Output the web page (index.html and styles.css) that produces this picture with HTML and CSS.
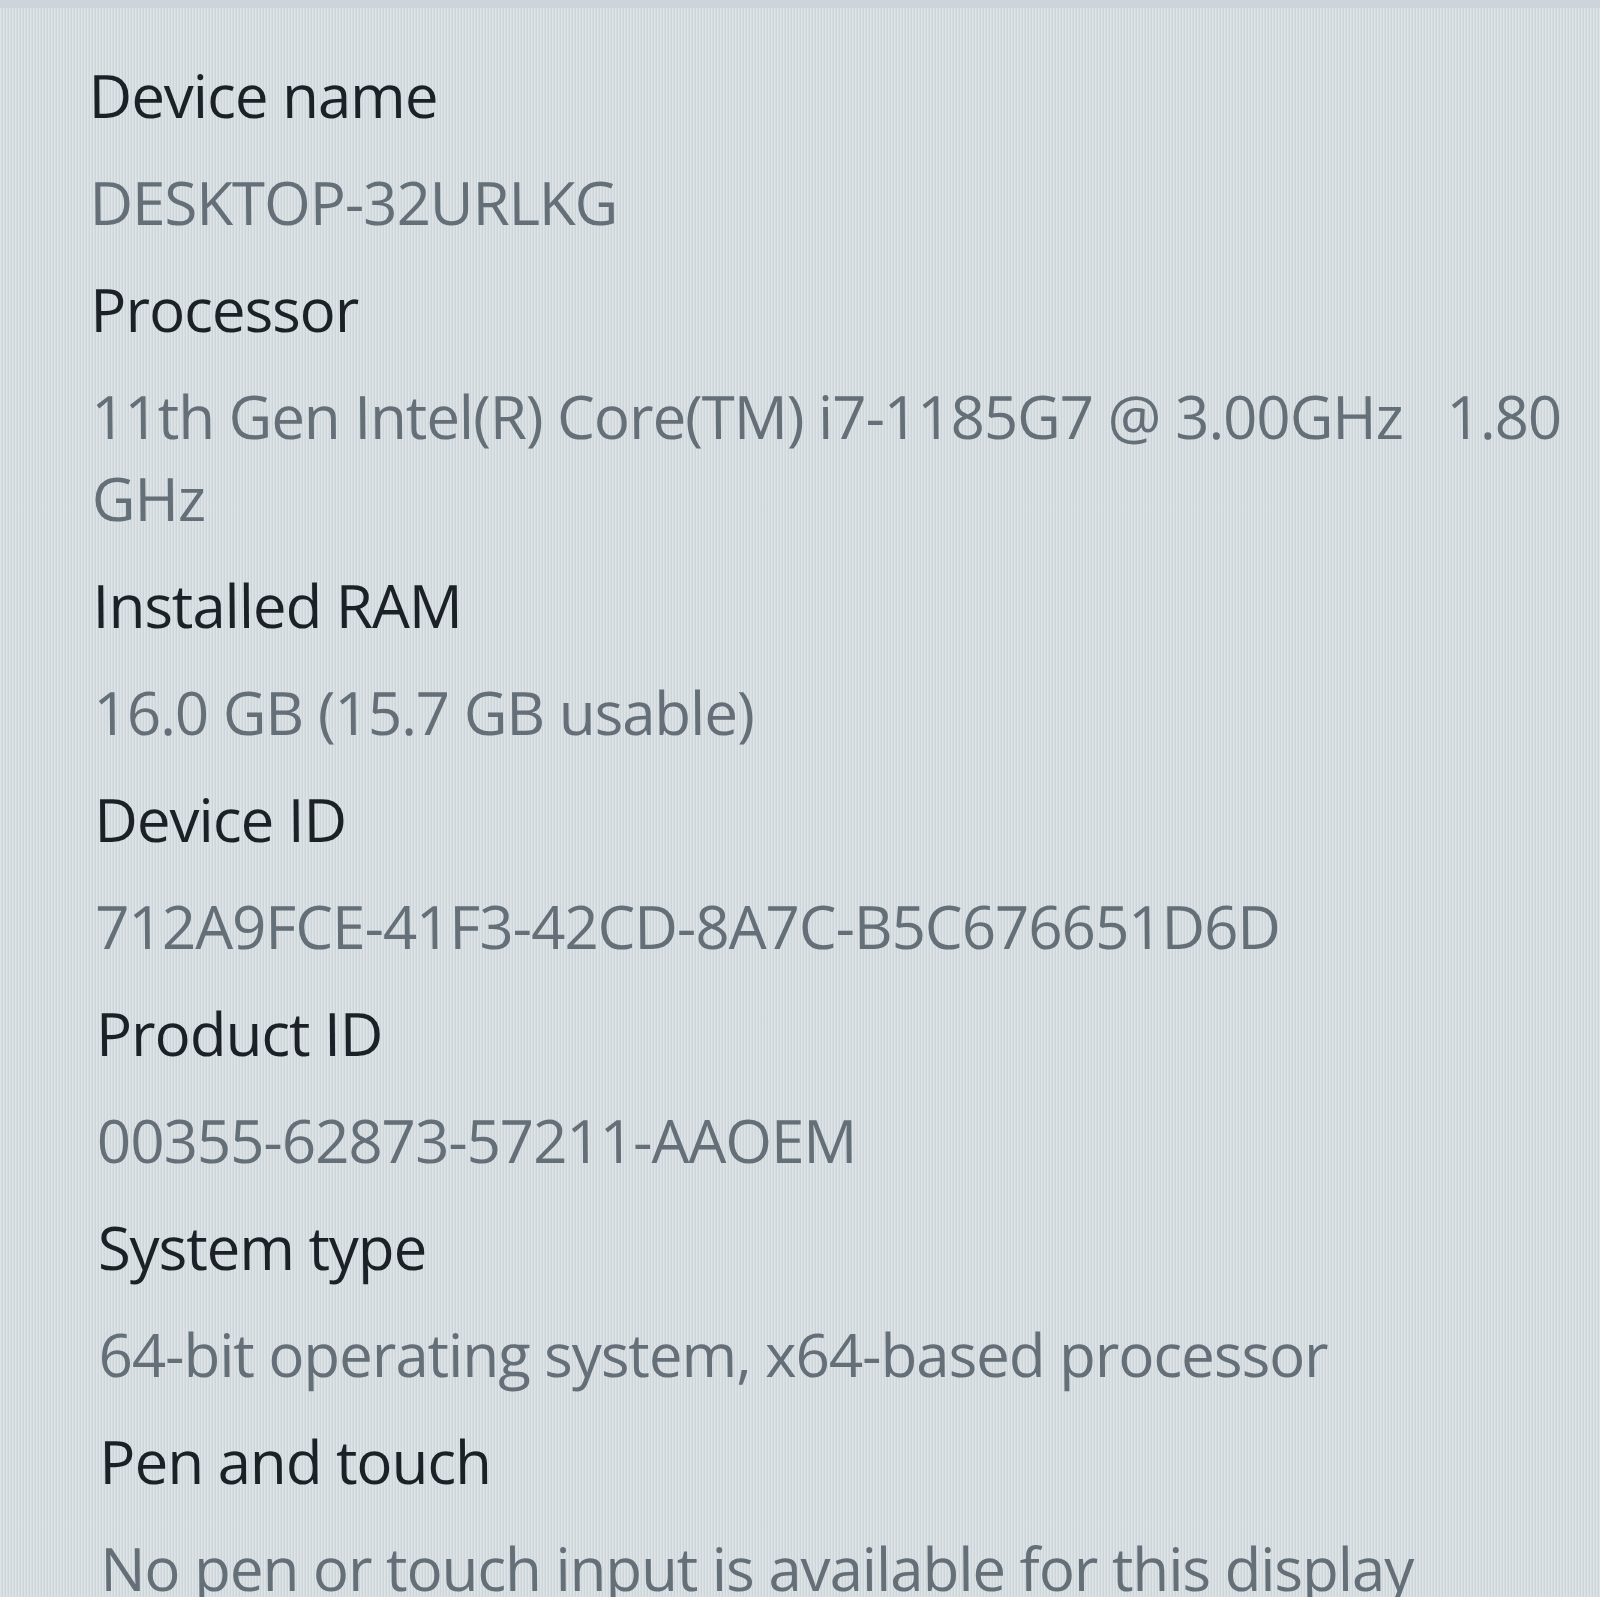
FILE: index.html
```html
<!DOCTYPE html>
<html lang="en">

<head>
    <meta charset="UTF-8">
    <meta name="viewport" content="width=device-width, initial-scale=1.0">
    <title>About</title>
    <link rel="stylesheet" href="styles.css">
</head>

<body>
    <div class="screen">
        <dl class="specs">
            <dt>Device name</dt>
            <dd>DESKTOP-32URLKG</dd>

            <dt>Processor</dt>
            <dd>11th Gen Intel(R) Core(TM) i7-1185G7 @ 3.00GHz &nbsp; 1.80 GHz</dd>

            <dt>Installed RAM</dt>
            <dd>16.0 GB (15.7 GB usable)</dd>

            <dt>Device ID</dt>
            <dd>712A9FCE-41F3-42CD-8A7C-B5C676651D6D</dd>

            <dt>Product ID</dt>
            <dd>00355-62873-57211-AAOEM</dd>

            <dt>System type</dt>
            <dd>64-bit operating system, x64-based processor</dd>

            <dt>Pen and touch</dt>
            <dd>No pen or touch input is available for this display</dd>
        </dl>
        <div class="taskbar">
            <span class="taskbar-active"></span>
        </div>
    </div>
</body>

</html>
```

FILE: styles.css
```css
body {
    margin: 0;
    background: #d6dde1;
    font-family: 'Open Sans', 'Noto Sans', sans-serif;
}

.screen {
    width: 1600px;
    height: 1597px;
    overflow: hidden;
    display: flex;
    flex-direction: column;
    background-color: #d7dee2;
    /* faint vertical pixel grain of the panel */
    background-image: repeating-linear-gradient(90deg,
            rgba(255, 255, 255, 0.18) 0 1px,
            rgba(0, 0, 0, 0) 1px 2px,
            rgba(90, 105, 115, 0.08) 2px 3px);
    border-top: 8px solid #cdd5da;
}

.specs {
    flex: 1;
    margin: 0;
    padding: 46px 0 0 88px;
    width: 1490px;
    transform: skewX(0.45deg);
    transform-origin: top left;
}

.specs dt,
.specs dd {
    margin: 0 0 25px 0;
    font-size: 60px;
    line-height: 82px;
    letter-spacing: -1px;
}

.specs dt {
    color: #1b2127;
}

.specs dd {
    color: #656f78;
}

.taskbar {
    height: 5px;
    background: #a9b1b6;
    padding-left: 25px;
}

.taskbar-active {
    display: block;
    width: 100px;
    height: 3px;
    background: #3e5e88;
}
```
